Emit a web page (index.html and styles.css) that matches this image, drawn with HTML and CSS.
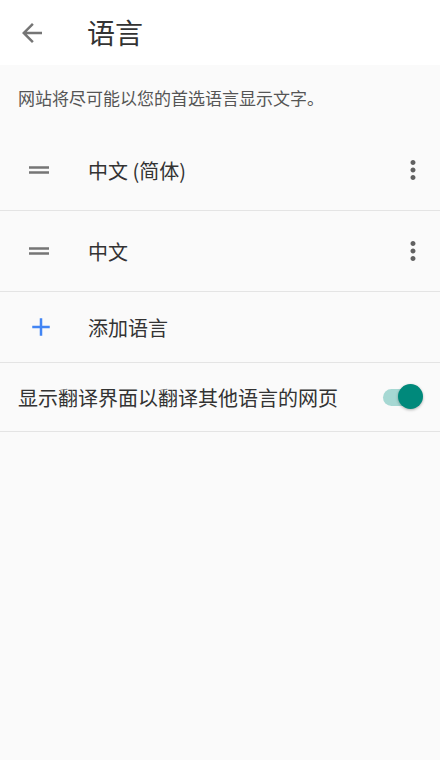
FILE: index.html
```html
<!DOCTYPE html>
<html>
<head>
    <meta charset="utf-8">
    <title>语言</title>
    <link rel="stylesheet" href="styles.css">
</head>
<body>
    <header class="toolbar">
        <svg class="back-icon" viewBox="0 0 24 24"><path d="M20 11H7.83l5.59-5.59L12 4l-8 8 8 8 1.41-1.41L7.83 13H20v-2z"/></svg>
        <h1>语言</h1>
    </header>

    <p class="intro">网站将尽可能以您的首选语言显示文字。</p>

    <div class="lang-list">
        <div class="lang-row">
            <svg class="drag-icon" viewBox="0 0 24 24"><path d="M20 9H4v2h16V9zM4 15h16v-2H4v2z"/></svg>
            <span class="lang-name">中文 (简体)</span>
            <svg class="more-icon" viewBox="0 0 24 24"><path d="M12 8c1.1 0 2-.9 2-2s-.9-2-2-2-2 .9-2 2 .9 2 2 2zm0 2c-1.1 0-2 .9-2 2s.9 2 2 2 2-.9 2-2-.9-2-2-2zm0 6c-1.1 0-2 .9-2 2s.9 2 2 2 2-.9 2-2-.9-2-2-2z"/></svg>
        </div>
        <div class="lang-row">
            <svg class="drag-icon" viewBox="0 0 24 24"><path d="M20 9H4v2h16V9zM4 15h16v-2H4v2z"/></svg>
            <span class="lang-name">中文</span>
            <svg class="more-icon" viewBox="0 0 24 24"><path d="M12 8c1.1 0 2-.9 2-2s-.9-2-2-2-2 .9-2 2 .9 2 2 2zm0 2c-1.1 0-2 .9-2 2s.9 2 2 2 2-.9 2-2-.9-2-2-2zm0 6c-1.1 0-2 .9-2 2s.9 2 2 2 2-.9 2-2-.9-2-2-2z"/></svg>
        </div>
        <div class="lang-row add-row">
            <svg class="add-icon" viewBox="0 0 24 24"><path d="M19 13h-6v6h-2v-6H5v-2h6V5h2v6h6v2z"/></svg>
            <span class="lang-name">添加语言</span>
        </div>
    </div>

    <div class="setting-row">
        <span class="setting-label">显示翻译界面以翻译其他语言的网页</span>
        <label class="switch">
            <input type="checkbox" checked>
            <span class="track"></span>
            <span class="thumb"></span>
        </label>
    </div>
</body>
</html>
```

FILE: styles.css
```css
/* General */
body {
    margin: 0;
    background-color: #fafafa;
    font-family: "Noto Sans CJK SC", "Noto Sans", sans-serif;
    color: #333;
    height: 760px;
}
svg {
    display: block;
}

/* Toolbar */
.toolbar {
    display: flex;
    align-items: center;
    height: 65px;
    background-color: #fff;
}
.back-icon {
    width: 30px;
    height: 30px;
    margin-left: 17px;
    fill: #757575;
}
.toolbar h1 {
    margin: -2px 0 0 40px;
    font-size: 28px;
    font-weight: normal;
    color: #333;
    line-height: 1;
}

/* Intro text */
.intro {
    margin: 0;
    height: 65px;
    padding: 0 18px;
    display: flex;
    align-items: center;
    font-size: 17px;
    color: #555;
}

/* Language list */
.lang-row {
    display: flex;
    align-items: center;
    height: 80px;
    border-bottom: 1px solid #e4e4e4;
}
.lang-row.add-row {
    height: 70px;
}
.drag-icon {
    width: 30px;
    height: 30px;
    margin-left: 24px;
    fill: #757575;
}
.add-icon {
    width: 30px;
    height: 30px;
    margin-left: 26px;
    fill: #4285f4;
}
.lang-name {
    margin-left: 34px;
    flex: 1;
    font-size: 20px;
}
.add-row .lang-name {
    margin-left: 32px;
}
.more-icon {
    width: 30px;
    height: 30px;
    margin-right: 12px;
    fill: #616161;
}

/* Translate setting */
.setting-row {
    display: flex;
    align-items: center;
    height: 68px;
    padding: 0 17px 0 18px;
    border-bottom: 1px solid #e4e4e4;
}
.setting-label {
    flex: 1;
    font-size: 20px;
}
.switch {
    position: relative;
    width: 42px;
    height: 26px;
}
.switch input {
    display: none;
}
.track {
    position: absolute;
    left: 2px;
    top: 5px;
    width: 38px;
    height: 17px;
    border-radius: 9px;
    background-color: #a6d8d3;
}
.thumb {
    position: absolute;
    right: 0;
    top: 0;
    width: 25px;
    height: 25px;
    border-radius: 50%;
    background-color: #00897b;
    box-shadow: 0 1px 3px rgba(0, 0, 0, 0.3);
}
```
